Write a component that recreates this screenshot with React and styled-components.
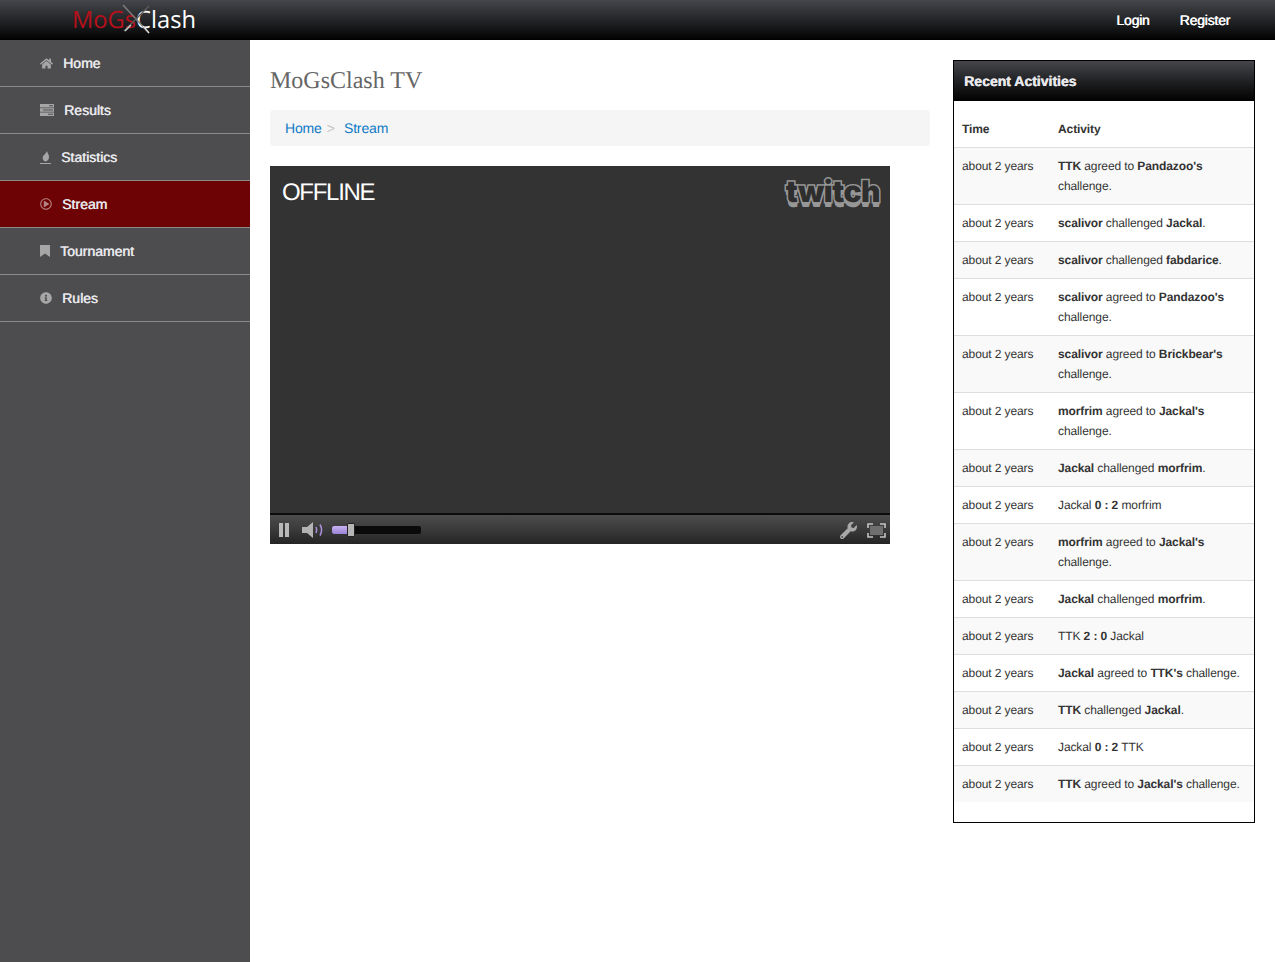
import React from 'react';
import styled, { createGlobalStyle } from 'styled-components';
import { FaHome, FaRegPlayCircle, FaInfoCircle, FaWrench } from 'react-icons/fa';

const GlobalStyle = createGlobalStyle`
  html, body {
    margin: 0;
    padding: 0;
    background: #fff;
    font-family: "Liberation Sans", Arial, sans-serif;
    text-rendering: geometricPrecision;
  }
  * {
    box-sizing: border-box;
  }
`;

const TasksIcon = () => (
  <svg width="14" height="12" viewBox="0 0 14 12" fill="currentColor">
    <path d="M0 0h14v3.400H0zM9 1.200v1h4v-1zM0 4.300h14v3.400H0zM3 5.500v1h10v-1zM0 8.600h14V12H0zM8 9.800v1h5v-1z" fillRule="evenodd" />
  </svg>
);

const FlameIcon = () => (
  <svg width="11" height="13" viewBox="0 0 11 13" fill="currentColor">
    <path d="M7 0c.4 2 2 3.500 2 6 0 2.400-1.500 4-3.500 4.500C3.500 10 2.500 8.500 2.700 6.500 3 4 6 3 7 0z" />
    <rect x="0" y="12" width="11" height="1" />
  </svg>
);

const BookmarkIcon = () => (
  <svg width="10" height="12" viewBox="0 0 10 12" fill="currentColor">
    <path d="M0 0h10v12L5 8.500 0 12z" />
  </svg>
);

const SwordsIcon = () => (
  <svg width="30" height="32" viewBox="0 0 30 32">
    <path d="M1 1l26 28" stroke="#7c7c7c" strokeWidth="1.500" />
    <path d="M27 2L2 27" stroke="#5a5a5a" strokeWidth="1.500" />
    <path d="M3 27l6-6" stroke="#d0d0d0" strokeWidth="1.400" />
    <path d="M21 22l6 7" stroke="#d8d8d8" strokeWidth="1.400" />
  </svg>
);

const SpeakerIcon = () => (
  <svg width="22" height="16" viewBox="0 0 22 16">
    <path d="M0 5h5l6-5v16l-6-5H0z" fill="#b3b3b3" />
    <path d="M14 5c1 2 1 4 0 6" stroke="#a78fd8" strokeWidth="1.600" fill="none" />
    <path d="M18 2.500c2 3.500 2 7.500 0 11" stroke="#a78fd8" strokeWidth="1.600" fill="none" />
  </svg>
);

const FullscreenIcon = () => (
  <svg width="19" height="15" viewBox="0 0 19 15">
    <rect x="3" y="3" width="13" height="9" fill="#6f6f6f" />
    <path d="M1 5V1h5M13 1h5v4M18 10v4h-5M6 14H1v-4" stroke="#c4c4c4" strokeWidth="1.600" fill="none" />
  </svg>
);

const menu = [
  { label: 'Home', icon: <FaHome size={13} />, width: 13 },
  { label: 'Results', icon: <TasksIcon />, width: 14 },
  { label: 'Statistics', icon: <FlameIcon />, width: 11 },
  { label: 'Stream', icon: <FaRegPlayCircle size={12} />, width: 12, active: true },
  { label: 'Tournament', icon: <BookmarkIcon />, width: 10 },
  { label: 'Rules', icon: <FaInfoCircle size={12} />, width: 12 },
];

const activities = [
  <><b>TTK</b> agreed to <b>Pandazoo's</b> challenge.</>,
  <><b>scalivor</b> challenged <b>Jackal</b>.</>,
  <><b>scalivor</b> challenged <b>fabdarice</b>.</>,
  <><b>scalivor</b> agreed to <b>Pandazoo's</b> challenge.</>,
  <><b>scalivor</b> agreed to <b>Brickbear's</b> challenge.</>,
  <><b>morfrim</b> agreed to <b>Jackal's</b> challenge.</>,
  <><b>Jackal</b> challenged <b>morfrim</b>.</>,
  <>Jackal <b>0 : 2</b> morfrim</>,
  <><b>morfrim</b> agreed to <b>Jackal's</b> challenge.</>,
  <><b>Jackal</b> challenged <b>morfrim</b>.</>,
  <>TTK <b>2 : 0</b> Jackal</>,
  <><b>Jackal</b> agreed to <b>TTK's</b> challenge.</>,
  <><b>TTK</b> challenged <b>Jackal</b>.</>,
  <>Jackal <b>0 : 2</b> TTK</>,
  <><b>TTK</b> agreed to <b>Jackal's</b> challenge.</>,
];

const App = () => (
  <>
    <GlobalStyle />
    <Navbar>
      <Logo>
        <LogoRed>MoGs</LogoRed>Clash
        <Swords>
          <SwordsIcon />
        </Swords>
      </Logo>
      <NavLinks>
        <NavLink>Login</NavLink>
        <NavLink>Register</NavLink>
      </NavLinks>
    </Navbar>

    <Layout>
      <Sidebar>
        {menu.map((item) => (
          <MenuItem key={item.label} $active={item.active}>
            <MenuIcon $width={item.width}>{item.icon}</MenuIcon>
            {item.label}
          </MenuItem>
        ))}
      </Sidebar>

      <Main>
        <Content>
          <Title>MoGsClash TV</Title>
          <Breadcrumb>
            <Crumb>Home</Crumb>
            <Divider>&gt;</Divider>
            <Crumb>Stream</Crumb>
          </Breadcrumb>

          <Player>
            <Screen>
              <Offline>OFFLINE</Offline>
              <TwitchLogo>twitch</TwitchLogo>
            </Screen>
            <Controls>
              <PauseButton>
                <span />
                <span />
              </PauseButton>
              <SpeakerIcon />
              <Volume>
                <VolumeFill />
                <VolumeKnob />
              </Volume>
              <ControlsRight>
                <FaWrench size={17} color="#a8a8a8" />
                <FullscreenIcon />
              </ControlsRight>
            </Controls>
          </Player>
        </Content>

        <Panel>
          <PanelHeader>Recent Activities</PanelHeader>
          <Table>
            <thead>
              <tr>
                <TimeHead>Time</TimeHead>
                <HeadCell>Activity</HeadCell>
              </tr>
            </thead>
            <tbody>
              {activities.map((activity, i) => (
                <Row key={i}>
                  <Cell>about 2 years</Cell>
                  <Cell>{activity}</Cell>
                </Row>
              ))}
            </tbody>
          </Table>
        </Panel>
      </Main>
    </Layout>
  </>
);

const Navbar = styled.header`
  height: 40px;
  display: flex;
  align-items: center;
  justify-content: space-between;
  padding: 0 45px 0 72px;
  background: linear-gradient(to bottom, #45464b 0%, #1d1e20 60%, #010101 100%);
`;

const Logo = styled.div`
  position: relative;
  margin-bottom: 2px;
  font-family: "Open Sans", sans-serif;
  font-size: 23.700px;
  line-height: 38px;
  color: #fff;
`;

const LogoRed = styled.span`
  color: #b8101a;
`;

const Swords = styled.span`
  position: absolute;
  left: 50px;
  top: 4px;
  display: block;
  line-height: 0;
`;

const NavLinks = styled.nav`
  display: flex;
  gap: 30px;
`;

const NavLink = styled.a`
  font-size: 14px;
  font-weight: 400;
  letter-spacing: -0.200px;
  color: #fff;
  text-shadow: 0.5px 0 0 #fff;
`;

const Layout = styled.div`
  display: flex;
  min-height: 922px;
`;

const Sidebar = styled.aside`
  width: 250px;
  flex-shrink: 0;
  background: #4d4d4f;
`;

const MenuItem = styled.a`
  display: flex;
  align-items: center;
  height: 47px;
  padding-left: 40px;
  border-bottom: 1px solid #8a8a8a;
  background: ${(p) => (p.$active ? '#6d0304' : 'transparent')};
  color: #e8e8ec;
  font-size: 14px;
  text-shadow: 0.5px 0 0 #e8e8ec;
`;

const MenuIcon = styled.span`
  display: flex;
  align-items: center;
  width: ${(p) => p.$width}px;
  margin-right: 10px;
  color: rgba(255, 255, 255, 0.5);
  text-shadow: none;
`;

const Main = styled.main`
  flex: 1;
  display: flex;
  align-items: flex-start;
  padding: 20px 20px 0;
`;

const Content = styled.section`
  width: 660px;
  flex-shrink: 0;
`;

const Title = styled.h1`
  margin: 0 0 16px;
  height: 34px;
  font-family: "Liberation Serif", "Times New Roman", serif;
  font-size: 24px;
  font-weight: 400;
  line-height: 42px;
  color: #666;
`;

const Breadcrumb = styled.nav`
  display: flex;
  align-items: center;
  height: 36px;
  margin-bottom: 20px;
  padding: 0 15px;
  background: #f5f5f5;
  border-radius: 4px;
  font-size: 14px;
`;

const Crumb = styled.a`
  letter-spacing: -0.150px;
  color: #0f7ac6;
`;

const Divider = styled.span`
  margin: 0 9px 0 5px;
  color: #c4c4c4;
`;

const Player = styled.div`
  width: 620px;
  height: 378px;
  display: flex;
  flex-direction: column;
  background: #333;
`;

const Screen = styled.div`
  flex: 1;
  display: flex;
  align-items: flex-start;
  justify-content: space-between;
  padding: 12px 10px 0 12px;
`;

const Offline = styled.div`
  font-size: 24px;
  line-height: 30px;
  letter-spacing: -1.300px;
  color: #fff;
`;

const TwitchLogo = styled.div`
  font-family: Inter, sans-serif;
  font-size: 30px;
  font-weight: 900;
  line-height: 28px;
  letter-spacing: -0.500px;
  color: #2e2e2e;
  -webkit-text-stroke: 3px #979797;
  paint-order: stroke fill;
  text-shadow: 0 1px 0 #979797, 0 2px 0 #979797, 0 3px 0 #979797, 0 4px 0 #979797, 0 5px 0 #979797;
`;

const Controls = styled.div`
  height: 31px;
  display: flex;
  align-items: center;
  padding: 1px 4px 0 9px;
  border-top: 2px solid #0c0c0c;
  background: linear-gradient(to bottom, #4c4c4c 0%, #3a3a3a 50%, #242424 100%);
`;

const PauseButton = styled.div`
  display: flex;
  gap: 2px;
  margin-right: 13px;

  span {
    display: block;
    width: 4px;
    height: 14px;
    background: #b8b8b8;
  }
`;

const Volume = styled.div`
  position: relative;
  width: 89px;
  height: 8px;
  margin-left: 8px;
  border-radius: 2px;
  background: #0a0a0a;
`;

const VolumeFill = styled.div`
  width: 16px;
  height: 100%;
  border-radius: 2px 0 0 2px;
  background: linear-gradient(to bottom, #c7b3f2, #9a82d6);
`;

const VolumeKnob = styled.div`
  position: absolute;
  left: 15px;
  top: -3px;
  width: 8px;
  height: 14px;
  border: 1px solid #222;
  border-radius: 1px;
  background: #b5b5b5;
`;

const ControlsRight = styled.div`
  display: flex;
  align-items: center;
  gap: 10px;
  margin-left: auto;
`;

const Panel = styled.aside`
  width: 302px;
  flex-shrink: 0;
  margin-left: 23px;
  padding-bottom: 20px;
  border: 1px solid #000;
`;

const PanelHeader = styled.h2`
  margin: 0;
  height: 40px;
  padding: 0 10px;
  background: linear-gradient(to bottom, #45464b 0%, #1d1e20 55%, #010101 100%);
  font-size: 14px;
  font-weight: 700;
  line-height: 40px;
  color: #e8e8ec;
  text-shadow: 0.5px 0 0 #e8e8ec;
`;

const Table = styled.table`
  width: 100%;
  margin-top: 10px;
  border-collapse: collapse;
  table-layout: fixed;
  font-size: 12px;
  line-height: 20px;
  letter-spacing: -0.100px;
  color: #333;

  b {
    font-weight: 700;
  }
`;

const HeadCell = styled.th`
  padding: 8px;
  text-align: left;
  font-weight: 700;
  vertical-align: bottom;
  border-bottom: 1px solid #ddd;
`;

const TimeHead = styled(HeadCell)`
  width: 96px;
`;

const Row = styled.tr`
  &:nth-child(odd) {
    background: #f9f9f9;
  }
  &:not(:last-child) td {
    border-bottom: 1px solid #ddd;
  }
`;

const Cell = styled.td`
  padding: 8px;
  vertical-align: top;
`;

export default App;
